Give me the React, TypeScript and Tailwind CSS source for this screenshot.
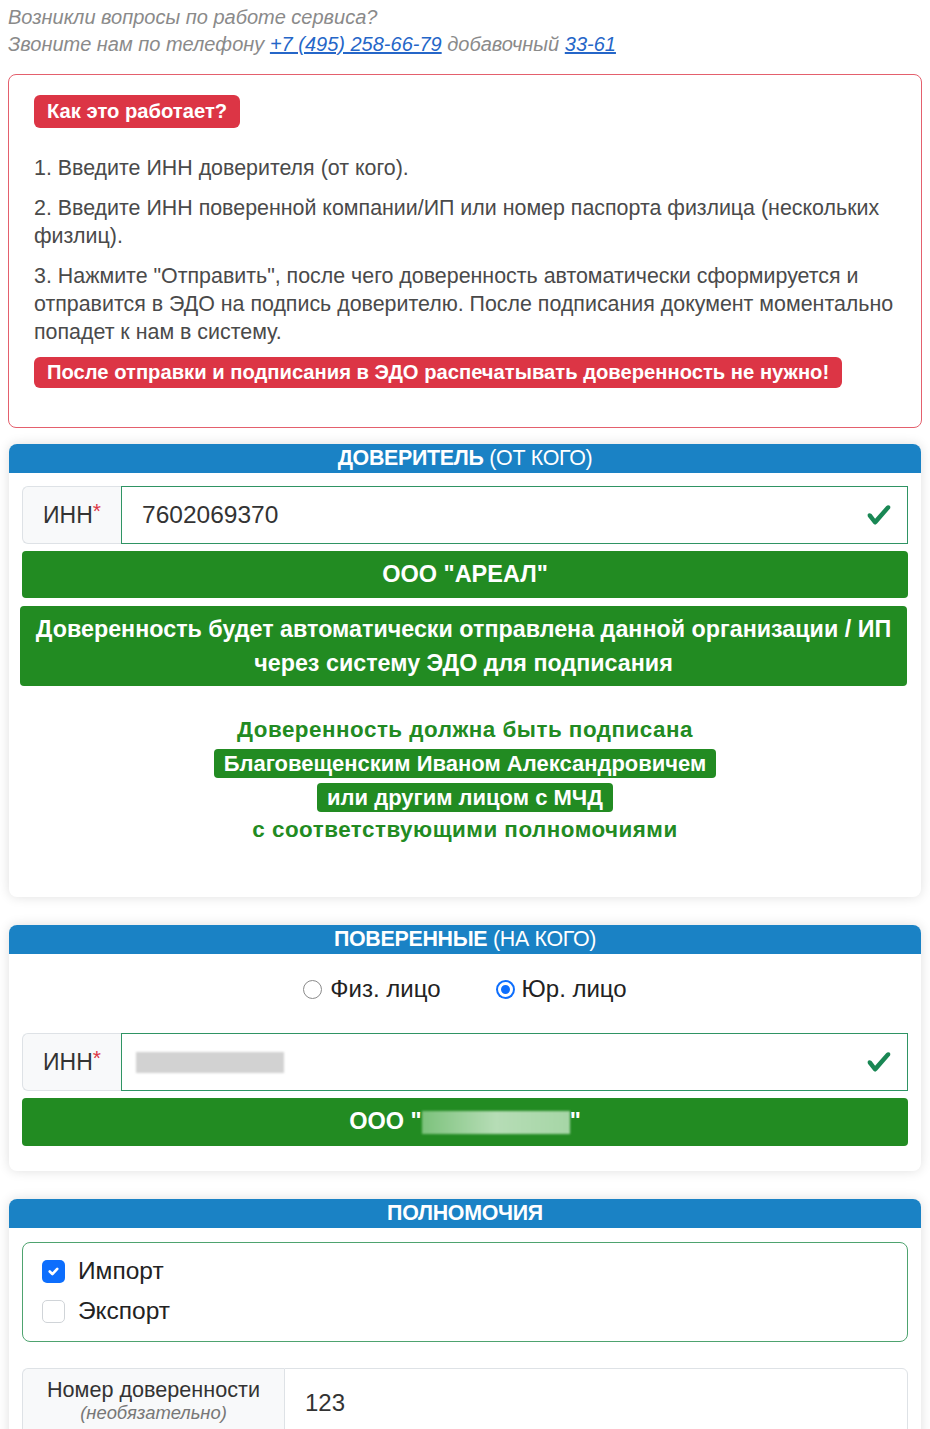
import React from "react";

const CheckIcon = () => (
  <svg width="26" height="26" viewBox="0 0 8 8" className="shrink-0">
    <path
      fill="#198754"
      d="M2.3 6.73.6 4.53c-.4-1.04.46-1.4 1.1-.8l1.1 1.4 3.4-3.8c.6-.63 1.6-.27 1.2.7l-4 4.6c-.43.5-.8.4-1.1.1z"
    />
  </svg>
);

function CardHeader({ bold, normal }: { bold: string; normal?: string }) {
  return (
    <div className="h-[29px] bg-[#1a82c5] rounded-t-lg text-white text-center text-[21.4px] leading-[29px] tracking-[-0.3px]">
      <span className="font-bold">{bold}</span>
      {normal ? <span> {normal}</span> : null}
    </div>
  );
}

function InnGroup({ children }: { children: React.ReactNode }) {
  return (
    <div className="flex h-[58px]">
      <div className="w-[99px] shrink-0 flex items-center justify-center bg-[#f8f9fa] border border-r-0 border-[#dee2e6] rounded-l-md text-[23px] text-[#333]">
        <span>ИНН</span>
        <span className="text-[#dc3545] text-[21px] leading-none -mt-[10px]">*</span>
      </div>
      <div className="flex-1 flex items-center justify-between border border-[#2f9464] pl-[20px] pr-[15px]">
        {children}
        <CheckIcon />
      </div>
    </div>
  );
}

function Card({ children }: { children: React.ReactNode }) {
  return (
    <div className="mx-[9px] bg-white rounded-lg shadow-[0_0_12px_rgba(0,0,0,0.13)]">
      {children}
    </div>
  );
}

export default function App() {
  return (
    <div className="w-[930px] min-h-[1429px] bg-white font-['Liberation_Sans',Arial,sans-serif] text-[#444] pb-10">
      {/* Top contact text */}
      <div className="px-2 pt-[4px] italic text-[#8a8a8a] text-[20px] leading-[27px]">
        <div>Возникли вопросы по работе сервиса?</div>
        <div>
          Звоните нам по телефону{" "}
          <a className="text-[#2566c8] underline" href="#">
            +7 (495) 258-66-79
          </a>{" "}
          добавочный{" "}
          <a className="text-[#2566c8] underline" href="#">
            33-61
          </a>
        </div>
      </div>

      {/* How it works box */}
      <div className="mx-2 mt-[16px] border border-[#e4606d] rounded-lg pl-[25px] pr-[10px] pt-[20px] pb-[39px]">
        <div className="inline-block h-[33px] bg-[#dc3545] text-white font-bold text-[20.2px] leading-[33px] px-[13px] rounded-md">
          Как это работает?
        </div>
        <div className="text-[21.4px] leading-[28px] text-[#4a4a4a]">
          <p className="mt-[26px]">1. Введите ИНН доверителя (от кого).</p>
          <p className="mt-[12px]">
            2. Введите ИНН поверенной компании/ИП или номер паспорта физлица (нескольких физлиц).
          </p>
          <p className="mt-[12px]">
            3. Нажмите "Отправить", после чего доверенность автоматически сформируется и отправится в ЭДО на
            подпись доверителю. После подписания документ моментально попадет к нам в систему.
          </p>
        </div>
        <div className="mt-[11px] inline-block h-[31px] bg-[#dc3545] text-white font-bold text-[20.2px] leading-[31px] px-[13px] rounded-md">
          После отправки и подписания в ЭДО распечатывать доверенность не нужно!
        </div>
      </div>

      {/* Card 1: Доверитель */}
      <div className="mt-[16px]">
        <Card>
          <CardHeader bold="ДОВЕРИТЕЛЬ" normal="(ОТ КОГО)" />
          <div className="px-[13px] pt-[13px] pb-[50px]">
            <InnGroup>
              <span className="text-[24.5px] text-[#333]">7602069370</span>
            </InnGroup>
            <div className="mt-[7px] h-[47px] bg-[#228b22] rounded-[4px] flex items-center justify-center text-white font-bold text-[23.5px]">
              ООО "АРЕАЛ"
            </div>
            <div className="mt-[8px] -ml-[2px] mr-[1px] bg-[#228b22] rounded-[4px] py-[6px] text-center text-white font-bold text-[23.3px] leading-[34px]">
              Доверенность будет автоматически отправлена данной организации / ИП
              <br />
              через систему ЭДО для подписания
            </div>
            <div className="mt-[27px] flex flex-col items-center text-[#228b22] font-bold text-[22.4px] tracking-[0.5px]">
              <div className="leading-[34px]">Доверенность должна быть подписана</div>
              <div className="mt-[2px] h-[29px] leading-[29px] bg-[#228b22] text-white rounded-[4px] px-[10px] tracking-normal text-[22px]">
                Благовещенским Иваном Александровичем
              </div>
              <div className="mt-[5px] h-[29px] leading-[29px] bg-[#228b22] text-white rounded-[4px] px-[10px] tracking-normal text-[22px]">
                или другим лицом с МЧД
              </div>
              <div className="mt-[1px] leading-[34px]">с соответствующими полномочиями</div>
            </div>
          </div>
        </Card>
      </div>

      {/* Card 2: Поверенные */}
      <div className="mt-[28px]">
        <Card>
          <CardHeader bold="ПОВЕРЕННЫЕ" normal="(НА КОГО)" />
          <div className="px-[13px] pb-[25px]">
            <div className="mt-[22px] h-[26px] flex items-center justify-center gap-[55px] text-[24px] text-[#222]">
              <label className="flex items-center gap-[8px]">
                <span className="w-[19px] h-[19px] rounded-full border border-[#8a8a8a] bg-white" />
                <span>Физ. лицо</span>
              </label>
              <label className="flex items-center gap-[7px]">
                <span className="w-[19px] h-[19px] rounded-full bg-[#0d6efd] flex items-center justify-center">
                  <span className="w-[15px] h-[15px] rounded-full border-[3px] border-white bg-[#0d6efd]" />
                </span>
                <span>Юр. лицо</span>
              </label>
            </div>
            <div className="mt-[31px]">
              <InnGroup>
                <span className="-ml-[6px] w-[148px] h-[21px] bg-[#d2d2d2] blur-[1px]" />
              </InnGroup>
            </div>
            <div className="mt-[7px] h-[48px] bg-[#228b22] rounded-[4px] flex items-center justify-center text-white font-bold text-[23.5px]">
              <span>ООО "</span>
              <span className="w-[148px] h-[23px] bg-gradient-to-r from-[#7cc27c] via-[#b6ddb6] to-[#a6d6a6] blur-[1px]" />
              <span>"</span>
            </div>
          </div>
        </Card>
      </div>

      {/* Card 3: Полномочия */}
      <div className="mt-[28px]">
        <Card>
          <CardHeader bold="ПОЛНОМОЧИЯ" />
          <div className="px-[13px] pb-[30px]">
            <div className="mt-[14px] border border-[#4ea36f] rounded-lg pl-[19px] pt-[8px] pb-[10px] text-[24.5px] text-[#222]">
              <label className="flex items-center h-[40px] gap-[13px]">
                <span className="w-[23px] h-[23px] rounded-[5px] bg-[#0d6efd] flex items-center justify-center">
                  <svg width="15" height="15" viewBox="0 0 20 20">
                    <path
                      fill="none"
                      stroke="#fff"
                      strokeLinecap="round"
                      strokeLinejoin="round"
                      strokeWidth="3.5"
                      d="m5 10 3.5 3.5 6.5-7"
                    />
                  </svg>
                </span>
                <span>Импорт</span>
              </label>
              <label className="flex items-center h-[40px] gap-[13px]">
                <span className="w-[23px] h-[23px] rounded-[5px] border border-[#d0d4d8] bg-white" />
                <span>Экспорт</span>
              </label>
            </div>
            <div className="mt-[26px] flex h-[70px]">
              <div className="w-[262px] shrink-0 flex flex-col items-center pt-[7px] bg-[#f8f9fa] border border-r-0 border-[#dee2e6] rounded-l-md">
                <span className="text-[21.6px] leading-[28px] text-[#333]">Номер доверенности</span>
                <span className="text-[18.4px] leading-[18px] italic text-[#777]">(необязательно)</span>
              </div>
              <div className="flex-1 flex items-center border border-[#dee2e6] rounded-r-md pl-[20px] text-[24px] text-[#333]">
                123
              </div>
            </div>
          </div>
        </Card>
      </div>
    </div>
  );
}
